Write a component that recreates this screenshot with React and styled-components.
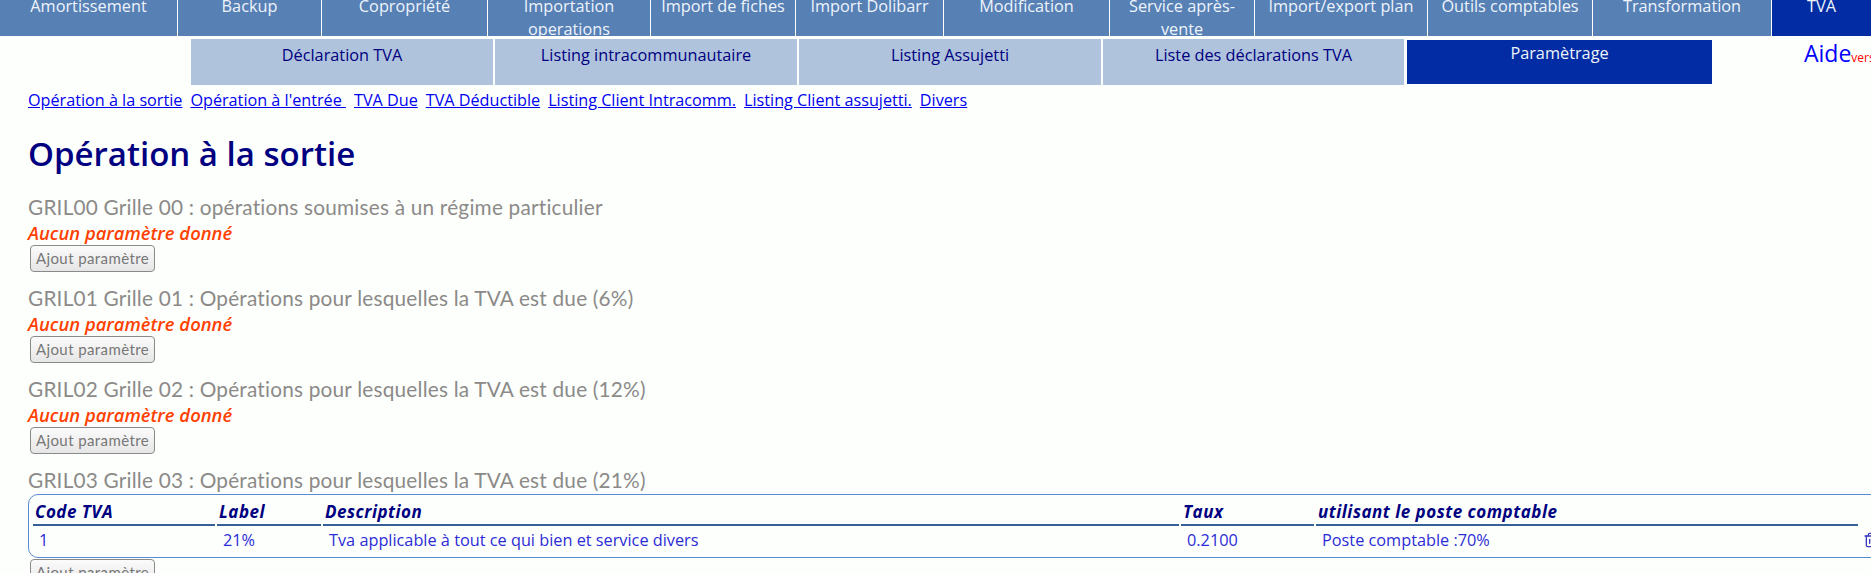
import React from 'react'
import styled, { createGlobalStyle } from 'styled-components'
import { Trash2 } from 'lucide-react'

const mainTabs = [
  { label: 'Amortissement', width: 178 },
  { label: 'Backup', width: 144 },
  { label: 'Copropriété', width: 166 },
  { label: 'Importation operations', width: 163 },
  { label: 'Import de fiches', width: 145 },
  { label: 'Import Dolibarr', width: 148 },
  { label: 'Modification', width: 166 },
  { label: 'Service après-vente', width: 145 },
  { label: 'Import/export plan', width: 173 },
  { label: 'Outils comptables', width: 165 },
  { label: 'Transformation', width: 179 },
  { label: 'TVA', width: 99, active: true },
]

const subTabs = [
  { label: 'Déclaration TVA' },
  { label: 'Listing intracommunautaire' },
  { label: 'Listing Assujetti' },
  { label: 'Liste des déclarations TVA' },
  { label: 'Paramètrage', active: true },
]

const links = [
  'Opération à la sortie',
  "Opération à l'entrée\u00a0",
  'TVA Due',
  'TVA Déductible',
  'Listing Client Intracomm.',
  'Listing Client assujetti.',
  'Divers',
]

const grilles = [
  'GRIL00 Grille 00 : opérations soumises à un régime particulier',
  'GRIL01 Grille 01 : Opérations pour lesquelles la TVA est due (6%)',
  'GRIL02 Grille 02 : Opérations pour lesquelles la TVA est due (12%)',
]

const App = () => {
  return (
    <Page>
      <GlobalStyle />
      <MainNav>
        {mainTabs.map((tab) => (
          <MainTab key={tab.label} $width={tab.width} $active={tab.active}>
            <span>{tab.label}</span>
          </MainTab>
        ))}
      </MainNav>
      <SubRow>
        <SubNav>
          {subTabs.map((tab) => (
            <SubTab key={tab.label} $active={tab.active}>
              {tab.label}
            </SubTab>
          ))}
        </SubNav>
        <Help>
          Aide<small>version</small>
        </Help>
      </SubRow>
      <Content>
        <LinkRow>
          {links.map((link) => (
            <a key={link} href="#top">
              {link}
            </a>
          ))}
        </LinkRow>
        <PageTitle>Opération à la sortie</PageTitle>
        {grilles.map((grille) => (
          <Section key={grille}>
            <SectionTitle>{grille}</SectionTitle>
            <Empty>Aucun paramètre donné</Empty>
            <AddButton>Ajout paramètre</AddButton>
          </Section>
        ))}
        <Section>
          <SectionTitle>
            GRIL03 Grille 03 : Opérations pour lesquelles la TVA est due (21%)
          </SectionTitle>
          <TableBox>
            <Table>
              <thead>
                <tr>
                  <HeadCell $width={182}>Code TVA</HeadCell>
                  <HeadCell $width={104}>Label</HeadCell>
                  <HeadCell $width={856}>Description</HeadCell>
                  <HeadCell $width={133}>Taux</HeadCell>
                  <HeadCell $width={542}>utilisant le poste comptable</HeadCell>
                  <IconCell as="th" />
                </tr>
              </thead>
              <tbody>
                <tr>
                  <Cell>1</Cell>
                  <Cell>21%</Cell>
                  <Cell>Tva applicable à tout ce qui bien et service divers</Cell>
                  <Cell>0.2100</Cell>
                  <Cell>Poste comptable :70%</Cell>
                  <IconCell>
                    <Trash2 size={16} />
                  </IconCell>
                </tr>
              </tbody>
            </Table>
          </TableBox>
          <AddButton $tight>Ajout paramètre</AddButton>
        </Section>
      </Content>
    </Page>
  )
}

export default App

const GlobalStyle = createGlobalStyle`
  html, body {
    margin: 0;
    height: 573px;
    overflow: hidden;
    background: #fdfffd;
  }
  body {
    font-family: "Open Sans", sans-serif;
    font-size: 16.3px;
  }
`

const Page = styled.div`
  width: 1871px;
  height: 573px;
  overflow: hidden;
`

const MainNav = styled.nav`
  display: flex;
  height: 36px;
  overflow: hidden;
`

const MainTab = styled.div`
  flex: 0 0 ${(p) => p.$width}px;
  box-sizing: border-box;
  padding: 0 10px;
  border-right: 1px solid #fff;
  background: ${(p) => (p.$active ? '#012ca3' : '#5780b5')};
  color: #eef4fb;
  line-height: 23px;
  text-align: center;
  span {
    display: block;
    margin-top: -5px;
  }
  &:last-child {
    border-right: 0;
  }
`

const SubRow = styled.div`
  display: flex;
  align-items: flex-start;
  padding: 3px 0 0 191px;
`

const SubNav = styled.div`
  display: grid;
  grid-template-columns: 302px 302px 302px 301px 306px;
  column-gap: 2px;
  align-items: start;
`

const SubTab = styled.div`
  box-sizing: border-box;
  height: ${(p) => (p.$active ? '44px' : '46px')};
  margin: ${(p) => (p.$active ? '1px 0 0 1px' : '0')};
  padding-top: ${(p) => (p.$active ? '2px' : '5px')};
  background: ${(p) => (p.$active ? '#012ca3' : '#afc3dd')};
  color: ${(p) => (p.$active ? '#eef4fb' : '#000080')};
  line-height: 23px;
  text-align: center;
`

const Help = styled.div`
  margin-left: 92px;
  color: #0000ff;
  font-size: 23px;
  line-height: 28px;
  white-space: nowrap;
  small {
    color: #ff0000;
    font-size: 12px;
  }
`

const Content = styled.main`
  padding: 4px 0 0 28px;
`

const LinkRow = styled.div`
  display: flex;
  gap: 8px;
  font-size: 16.2px;
  line-height: 22px;
  a {
    color: #0000ee;
    white-space: nowrap;
  }
`

const PageTitle = styled.h1`
  margin: 21px 0 17px;
  color: #000080;
  font-size: 33px;
  font-weight: 600;
  line-height: 44px;
`

const Section = styled.section`
  margin-top: 12px;
`

const SectionTitle = styled.h2`
  margin: 0;
  color: #8c8a88;
  font-family: "Lato", sans-serif;
  font-size: 20.8px;
  font-weight: 400;
  letter-spacing: 0.2px;
  line-height: 28px;
`

const Empty = styled.div`
  color: #ff4000;
  font-size: 18.4px;
  font-style: italic;
  font-weight: 600;
  line-height: 24px;
`

const AddButton = styled.button`
  display: block;
  box-sizing: border-box;
  width: 125px;
  height: 27px;
  margin: ${(p) => (p.$tight ? '1px' : '0')} 0 0 2px;
  padding: 0 0 2px;
  border: 1px solid #8a8a8a;
  border-radius: 4px;
  background: linear-gradient(#fbfbfb, #e6e6e6);
  color: #777;
  font-family: "Lato", sans-serif;
  font-size: 15px;
  letter-spacing: 0.4px;
`

const TableBox = styled.div`
  box-sizing: border-box;
  width: 1880px;
  height: 64px;
  padding: 4px;
  border: 1px solid #5b8bd2;
  border-radius: 10px;
`

const Table = styled.table`
  border-collapse: separate;
  border-spacing: 2px 0;
  margin-left: -2px;
  table-layout: fixed;
`

const HeadCell = styled.th`
  box-sizing: border-box;
  width: ${(p) => p.$width}px;
  height: 27px;
  padding: 0 0 0 2px;
  border-bottom: 2px solid #35609a;
  color: #000080;
  font-size: 17px;
  font-style: italic;
  font-weight: 700;
  letter-spacing: 0.5px;
  text-align: left;
`

const Cell = styled.td`
  height: 28px;
  padding: 0 0 0 6px;
  color: #2c2cd6;
  font-size: 16.3px;
`

const IconCell = styled.td`
  width: 20px;
  padding: 0 0 0 3px;
  color: #3a3ac0;
  svg {
    display: block;
  }
`
